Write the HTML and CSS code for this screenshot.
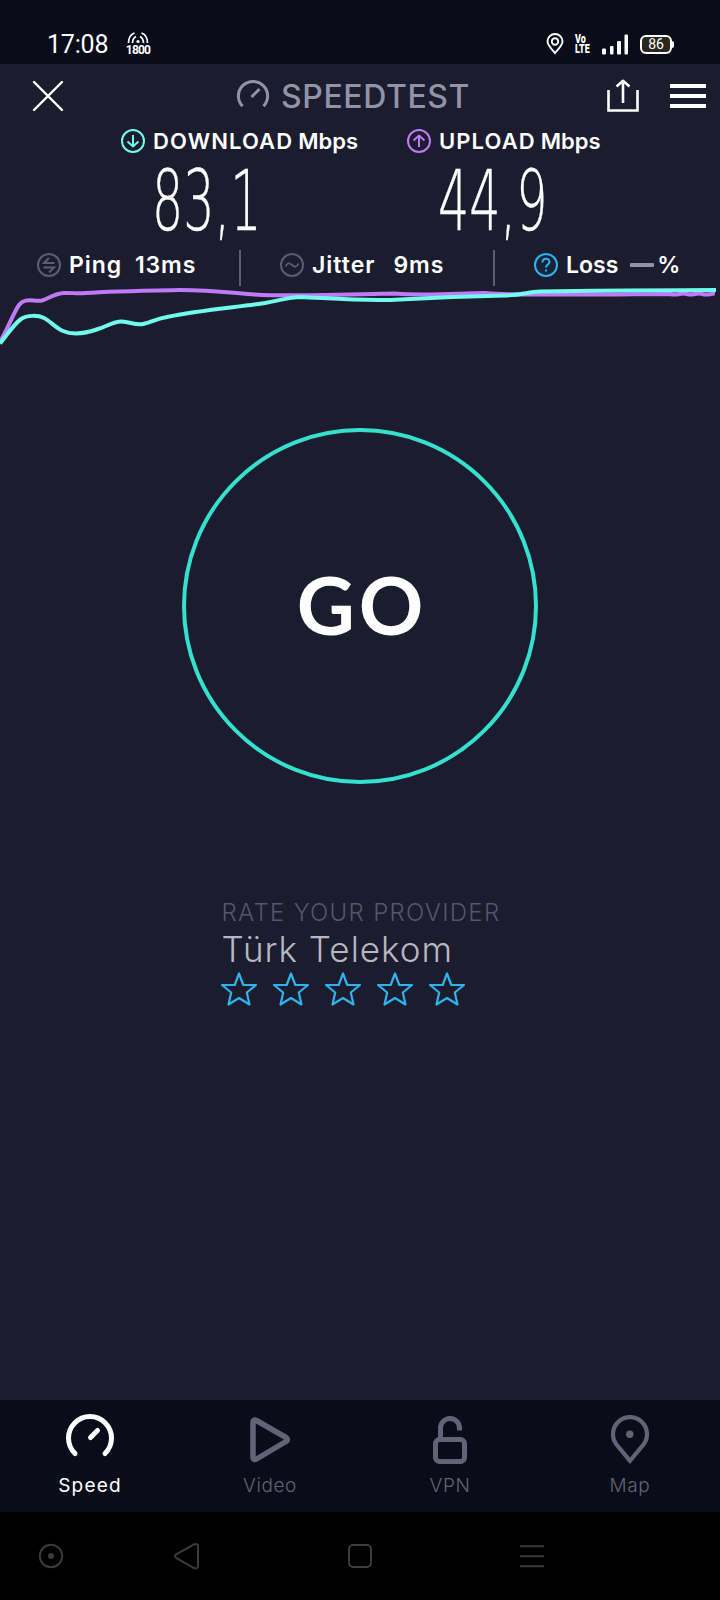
FILE: index.html
```html
<!DOCTYPE html>
<html lang="en">
<head>
    <meta charset="UTF-8">
    <meta name="viewport" content="width=device-width, initial-scale=1.0">
    <title>Speedtest</title>
    <link rel="stylesheet" href="styles.css">
</head>
<body>
    <div class="statusbar">
        <span class="clock">17:08</span>
        <div class="band">
            <svg width="22" height="12" viewBox="0 0 22 12" fill="none" stroke="#fff" stroke-width="1.7">
                <path d="M1.5 11C1.5 6 3.5 2.5 7.5 1M5.500 11C5.500 8 6.500 6 9 4.500M20.500 11C20.500 6 18.500 2.500 14.500 1M16.500 11C16.500 8 15.500 6 13 4.500"/>
                <circle cx="11" cy="9.500" r="1.600" fill="#fff" stroke="none"/>
            </svg>
            <span>1800</span>
        </div>
        <svg class="pin" width="18" height="22" viewBox="0 0 18 22" fill="none" stroke="#fff" stroke-width="1.9">
            <path d="M9 20C5 15.500 1.500 12 1.500 8.500a7.500 7.500 0 0 1 15 0C16.500 12 13 15.500 9 20z"/>
            <circle cx="9" cy="8.500" r="3.200"/>
        </svg>
        <div class="volte"><span>Vo</span><span>LTE</span></div>
        <svg class="signal" width="27" height="21" viewBox="0 0 27 21" fill="#fff">
            <rect x="0" y="14.500" width="4" height="6" rx="1"/>
            <rect x="8" y="12" width="3.500" height="8.500" rx="1"/>
            <rect x="15" y="7" width="4" height="13.500" rx="1"/>
            <rect x="22.500" y="0.500" width="3.500" height="20" rx="1"/>
        </svg>
        <div class="battery">86</div>
        <i class="nub"></i>
    </div>

    <header>
        <svg class="close" width="32" height="32" viewBox="0 0 32 32" stroke="#fff" stroke-width="2.400" stroke-linecap="round">
            <path d="M2 2L30 30M30 2L2 30"/>
        </svg>
        <div class="branding">
            <svg width="34" height="30" viewBox="0 0 34 30" fill="none" stroke="#9292a8" stroke-width="3">
                <path d="M6.500 27.200A14.600 14.600 0 1 1 27.500 27.200M15.500 18L23.500 10"/>
            </svg>
            <h1>SPEEDTEST</h1>
        </div>
        <svg class="share" width="32" height="33" viewBox="0 0 32 33" fill="none" stroke="#fff" stroke-width="2.600">
            <path d="M1.500 11V31.500H30.500V11"/>
            <path d="M16 24V2M9.500 7.500L16 1.800L22.500 7.500" stroke-linejoin="round"/>
        </svg>
        <div class="menu"><i></i><i></i><i></i></div>
    </header>

    <section class="results">
        <div class="result download">
            <div class="label">
                <svg width="24" height="24" viewBox="0 0 24 24" fill="none" stroke="#76f9ec" stroke-width="2">
                    <circle cx="12" cy="12" r="11"/>
                    <path d="M12 6V17.500M6.500 12.500L12 17.500L17.500 12.500"/>
                </svg>
                <span>DOWNLOAD</span><span class="unit">Mbps</span>
            </div>
            <div class="value"><span>83,1</span></div>
        </div>
        <div class="result upload">
            <div class="label">
                <svg width="24" height="24" viewBox="0 0 24 24" fill="none" stroke="#c07af4" stroke-width="2">
                    <circle cx="12" cy="12" r="11"/>
                    <path d="M12 18V6.500M6.500 11.500L12 6.500L17.500 11.500"/>
                </svg>
                <span>UPLOAD</span><span class="unit">Mbps</span>
            </div>
            <div class="value"><span>44,9</span></div>
        </div>
    </section>

    <section class="stats">
        <div class="stat ping">
            <svg width="24" height="24" viewBox="0 0 24 24" fill="none" stroke="#5c5d72" stroke-width="2">
                <circle cx="12" cy="12" r="11"/>
                <path d="M17.500 10H7L12 5M6.500 14.500H17L12 19.500"/>
            </svg>
            <span class="name">Ping</span><span class="amount">13ms</span>
        </div>
        <div class="stat jitter">
            <svg width="24" height="24" viewBox="0 0 24 24" fill="none" stroke="#5c5d72" stroke-width="2">
                <circle cx="12" cy="12" r="11"/>
                <path d="M5.500 13.500C7 9.500 9.500 9.500 12 12S17 14.500 18.500 10.500" stroke-width="1.800"/>
            </svg>
            <span class="name">Jitter</span><span class="amount">9ms</span>
        </div>
        <div class="stat loss">
            <svg width="24" height="24" viewBox="0 0 24 24" fill="none" stroke="#2fb3f0" stroke-width="2">
                <circle cx="12" cy="12" r="11" fill="#17233a"/>
                <path d="M8.500 9.500C8.500 4.700 15.500 4.700 15.500 9C15.500 11.500 12 11.500 12 14.500M12 16.500V18.500"/>
            </svg>
            <span class="name">Loss</span><i class="dash"></i><span class="percent">%</span>
        </div>
    </section>

    <!-- speed curves: upload below, download on top -->
    <svg class="graph" width="720" height="64" viewBox="0 286 720 64" fill="none" stroke-width="4">
        <path stroke="#c07af8" d="M0 342C8 328 14 312 19 305C25 297 34 302 42 300.500C50 298 54 293.500 64 293C73 292.500 76 294 86 293C110 291 150 290.500 180 290C215 290 240 294 262 295C300 296 360 294 395 293.500C430 296 460 293 485 293C510 295 530 294.500 550 294.500C600 295 640 294 670 294C678 296 681 292 687 294C693 296 697 292 702 294C708 296 712 293 715 293.500"/>
        <path stroke="#70fbee" d="M0 343.500C7 335 14 324 21 319C27 315 38 315 44 318C50 321 56 328 63 331C72 335 84 334 98 329C108 326 114 321 122 321.500C130 322 136 325.500 143 324C152 322 155 319 167 317C200 310 240 307 265 303C285 299 291 297 301 297C340 299 370 301.500 400 299.500C440 297 470 296 505 295.500C522 295 528 292 540 291.500C580 290.500 660 290.200 716 290"/>
    </svg>

    <main>
        <button class="go">GO</button>
        <div class="rating">
            <h2>RATE YOUR PROVIDER</h2>
            <p>Türk Telekom</p>
            <div class="stars">
                <svg viewBox="0 0 36 34"><path d="M18 1.500L22.300 13H35L25.800 20.500L28.500 32.500L18 26L7.500 32.500L10.200 20.500L1 13H13.700Z"/></svg>
                <svg viewBox="0 0 36 34"><path d="M18 1.500L22.300 13H35L25.800 20.500L28.500 32.500L18 26L7.500 32.500L10.200 20.500L1 13H13.700Z"/></svg>
                <svg viewBox="0 0 36 34"><path d="M18 1.500L22.300 13H35L25.800 20.500L28.500 32.500L18 26L7.500 32.500L10.200 20.500L1 13H13.700Z"/></svg>
                <svg viewBox="0 0 36 34"><path d="M18 1.500L22.300 13H35L25.800 20.500L28.500 32.500L18 26L7.500 32.500L10.200 20.500L1 13H13.700Z"/></svg>
                <svg viewBox="0 0 36 34"><path d="M18 1.500L22.300 13H35L25.800 20.500L28.500 32.500L18 26L7.500 32.500L10.200 20.500L1 13H13.700Z"/></svg>
            </div>
        </div>
    </main>

    <nav class="tabs">
        <a class="tab active">
            <svg width="60" height="60" viewBox="0 0 60 60" stroke-width="5" stroke-linecap="round">
                <path d="M15 41.500A21.500 21.500 0 1 1 45 41.500M30.500 25.500L37.500 18.500"/>
            </svg>
            <span>Speed</span>
        </a>
        <a class="tab">
            <svg width="60" height="60" viewBox="0 0 60 60" stroke-width="5.500" stroke-linejoin="round">
                <path d="M13 10.500Q13 7 16.500 8.500L46 25.500Q49 27.500 46 29.500L16.500 47Q13 48.500 13 45Z"/>
            </svg>
            <span>Video</span>
        </a>
        <a class="tab">
            <svg width="60" height="60" viewBox="0 0 60 60" stroke-width="5">
                <rect x="15.500" y="27.500" width="29" height="22" rx="4"/>
                <path d="M20.500 27V16A9.500 9.500 0 0 1 39.500 16V18.500"/>
            </svg>
            <span>VPN</span>
        </a>
        <a class="tab">
            <svg width="60" height="60" viewBox="0 0 60 60" stroke-width="4.200">
                <path d="M30 48.800L16.500 32.500A17 17 0 1 1 43.500 32.500Z"/>
                <circle class="dot" cx="29.800" cy="22.300" r="3.700"/>
            </svg>
            <span>Map</span>
        </a>
    </nav>

    <footer>
        <svg width="720" height="88" viewBox="0 0 720 88" fill="none" stroke="#3b3b3b" stroke-width="2">
            <circle cx="51" cy="44" r="11.200"/>
            <circle cx="51" cy="44" r="3" fill="#3b3b3b" stroke="none"/>
            <path d="M176.500 42.200L194 32.500Q198 31 198 35V53Q198 57.500 194 56L176.500 46.200Q173.500 44.200 176.500 42.200Z"/>
            <rect x="349" y="33" width="22" height="22" rx="4"/>
            <path d="M520 34.300H544M520 44.300H544M520 54.300H544"/>
        </svg>
    </footer>
</body>
</html>
```
FILE: styles.css
```css
* {
    box-sizing: border-box;
    margin: 0;
    padding: 0;
}

body {
    width: 720px;
    height: 1600px;
    overflow: hidden;
    display: flex;
    flex-direction: column;
    font-family: Inter, "Open Sans", sans-serif;
    background-color: #1b1c2e;
    color: #fff;
}

svg {
    display: block;
    flex: none;
}

/* Status bar */
.statusbar {
    height: 64px;
    padding: 24px 46px 0 47px;
    display: flex;
    align-items: center;
    background-color: #0a0c19;
}

.clock {
    font-family: Roboto, sans-serif;
    font-size: 25px;
    width: 79px;
    white-space: nowrap;
    letter-spacing: -0.2px;
}

.band {
    width: 24px;
    display: flex;
    flex-direction: column;
    align-items: center;
    font-family: Roboto, sans-serif;
    font-size: 12px;
    font-weight: 700;
    line-height: 12px;
    letter-spacing: -0.8px;
}

.pin {
    margin-left: auto;
}

.volte {
    margin-left: 11px;
    width: 16px;
    display: flex;
    flex-direction: column;
    font-family: Roboto, sans-serif;
    font-size: 12px;
    font-weight: 900;
    line-height: 10px;
    transform: scaleX(0.75);
    transform-origin: left;
}

.signal {
    margin-left: 11px;
}

.battery {
    margin-left: 11px;
    width: 32px;
    height: 19px;
    border: 2px solid #fff;
    border-radius: 6px;
    background-color: #2b271f;
    font-family: Roboto, sans-serif;
    font-size: 14px;
    line-height: 15px;
    text-align: center;
}

.nub {
    width: 2px;
    height: 7px;
    border-radius: 0 2px 2px 0;
    background-color: #fff;
}

/* Header */
header {
    height: 62px;
    display: flex;
    align-items: center;
    padding: 1px 14px 0 32px;
}

.branding {
    display: flex;
    align-items: center;
    margin-left: 172px;
    width: 371px;
    color: #9292a8;
}

.branding svg {
    margin-top: -3px;
}

.branding h1 {
    margin-top: 2px;
    margin-left: 11px;
    font-size: 32px;
    font-weight: 550;
    line-height: 32px;
    letter-spacing: 0.6px;
}

.menu {
    margin-left: 31px;
    display: flex;
    flex-direction: column;
    gap: 6px;
}

.menu i {
    width: 36px;
    height: 4px;
    background-color: #fff;
}

/* Download / upload */
.results {
    height: 122px;
    padding-left: 121px;
    display: flex;
}

.result {
    width: 286px;
}

.label {
    height: 29px;
    display: flex;
    align-items: center;
    font-size: 22px;
    font-weight: 600;
    white-space: nowrap;
    letter-spacing: 1.1px;
}

.label span {
    margin-left: 8px;
}

.label .unit {
    margin-left: 5px;
    letter-spacing: 0;
}

.value {
    height: 80px;
    padding-top: 6px;
    padding-left: 31px;
    font-family: "DejaVu Sans", sans-serif;
    font-weight: 200;
    font-size: 84px;
    line-height: 80px;
}

.value span {
    display: inline-block;
    transform: scaleX(0.585);
    transform-origin: left;
    -webkit-text-stroke: 0.5px #fff;
}

/* Ping, jitter, loss */
.stats {
    height: 38px;
    padding-top: 1px;
    display: flex;
    align-items: center;
    font-size: 23px;
    font-weight: 600;
}

.stat {
    height: 36px;
    padding-bottom: 5px;
    display: flex;
    align-items: center;
    white-space: nowrap;
}

.ping {
    width: 241px;
    padding-left: 37px;
    border-right: 2px solid #5c5d72;
    letter-spacing: 0.9px;
}

.jitter {
    width: 254px;
    padding-left: 39px;
    border-right: 2px solid #5c5d72;
    letter-spacing: 1px;
}

.loss {
    padding-left: 39px;
}

.name {
    margin-left: 8px;
}

.amount {
    margin-left: 13px;
}

.jitter .amount {
    margin-left: 18px;
}

.dash {
    width: 24px;
    height: 4px;
    margin: 0 3px 0 12px;
    border-radius: 1px;
    background-color: #9292a8;
}

/* GO button and rating */
main {
    flex: 1;
    display: flex;
    flex-direction: column;
    align-items: center;
    padding-top: 78px;
}

.go {
    flex: none;
    width: 356px;
    height: 356px;
    padding: 0 0 5px 4px;
    border: 4px solid #36e0cf;
    border-radius: 50%;
    background: none;
    color: #fff;
    font-family: Lato, sans-serif;
    font-size: 80px;
    font-weight: 700;
    letter-spacing: 4px;
}

.rating {
    width: 277px;
    margin-top: 115px;
    white-space: nowrap;
}

.rating h2 {
    font-size: 24px;
    font-weight: 300;
    line-height: 28px;
    letter-spacing: 1.3px;
    color: #55566a;
}

.rating p {
    font-size: 35px;
    font-weight: 300;
    line-height: 45px;
    letter-spacing: 1px;
    color: #b9b7c1;
}

.stars {
    display: flex;
    gap: 16px;
    margin-left: -1px;
}

.stars svg {
    width: 36px;
    height: 34px;
    fill: none;
    stroke: #2fb3f0;
    stroke-width: 2.2;
    stroke-linejoin: round;
}

/* Bottom tabs */
.tabs {
    height: 112px;
    display: flex;
    background-color: #0a0c19;
}

.tab {
    width: 180px;
    padding-top: 12px;
    display: flex;
    flex-direction: column;
    align-items: center;
    font-size: 19px;
    font-weight: 300;
    line-height: 28px;
    letter-spacing: 0.6px;
    color: #626377;
}

.tab svg {
    fill: none;
    stroke: currentColor;
}

.tab .dot {
    fill: currentColor;
    stroke: none;
}

.tab.active {
    color: #fff;
    font-weight: 400;
    letter-spacing: 1.2px;
}

footer {
    height: 88px;
    background-color: #000;
}
```
